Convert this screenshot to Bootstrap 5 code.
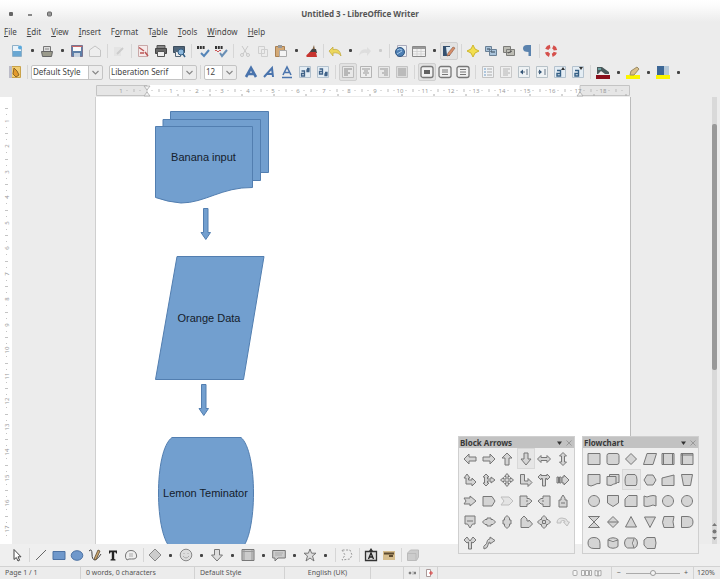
<!DOCTYPE html>
<html lang="en">
<head>
<meta charset="utf-8">
<meta name="viewport" content="width=device-width, initial-scale=1">
<title>Untitled 3 - LibreOffice Writer</title>
<link href="https://cdn.jsdelivr.net/npm/bootstrap@5.3.0/dist/css/bootstrap.min.css" rel="stylesheet">
<style>
  :root { --chrome: #ececec; --ink: #4c4c4c; --shape: #729fcf; }
  body { font-family: "Noto Sans", "Open Sans", sans-serif; font-size: 8px; line-height: 12px; color: var(--ink); background: var(--chrome); }
  .titlebar { height: 22px; padding: 6px 8px 0; background: linear-gradient(#fff, #fbfbfb 30%, var(--chrome)); }
  .titlebar h1 { font-size: 8px; line-height: 16px; color: #555; }
  .win-btns { width: 52px; height: 16px; }
  .menubar { height: 19px; padding: 0 4px; gap: 10px; }
  .menubar a { color: #444; text-decoration: none; }
  .toolrow { padding-left: 8px; }
  .row-std { height: 19px; }
  .row-fmt { height: 24px; padding-left: 6px; }
  .row-draw { height: 22px; background: #efefef; }
  .tbtn { width: 18px; height: 18px; padding: 0; border: 1px solid transparent; border-radius: 2px; background: none; display: flex; align-items: center; justify-content: center; flex: none; }
  .tbtn.pressed { background: #e2e2e2; border-color: #cfcfcf; }
  .tbtn svg { width: 14px; height: 14px; flex: none; }
  .drop { width: 12px; height: 16px; padding: 0; border: 0; background: none; flex: none; display: flex; align-items: center; justify-content: center; }
  .drop::before { content: ""; width: 3px; height: 3px; background: #444; border-radius: 1px; }
  .row-draw .drop { width: 13px; }
  .drop.off::before { background: #ccc; }
  .vsep { width: 6px; height: 14px; flex: none; background: linear-gradient(#d6d6d6, #d6d6d6) center / 1px 100% no-repeat; }
  .row-fmt .vsep { width: 7px; }
  .combo.form-select { font-size: 8px; line-height: 12px; height: 15px; padding: 0 15px 0 1px; border: 1px solid #c4c4c4; border-radius: 2px; color: #444; background-color: #fff; background-position: right 0 center; background-size: 14px 15px; flex: none;
    background-image: url("data:image/svg+xml,%3Csvg xmlns='http://www.w3.org/2000/svg' viewBox='0 0 14 15'%3E%3Cpath fill='%23ededed' d='M0 0h14v15H0z'/%3E%3Cpath stroke='%23c4c4c4' d='M.5 0v15'/%3E%3Cpath fill='none' stroke='%23888' stroke-width='1.2' d='M4.500 6l3 3 3-3'/%3E%3C/svg%3E"); }
  .w-style { width: 72px; margin-right: 6px; } .w-font { width: 88px; } .w-size { width: 33px; margin-right: 5px; }
  .hruler { height: 13px; padding-left: 6px; }
  .desk { padding-left: 2px; }
  .paper-w { width: 100%; max-width: 536px; }
  .hruler svg, .vruler svg { display: block; }
  .vruler { width: 12px; background: #fff; }
  .num { font-size: 6px; fill: #999; text-anchor: middle; }
  .paper { background: #fff; border-left: 1px solid #cfcfcf; border-right: 1px solid #bcbcbc; }
  .drawing { font-family: "Liberation Sans", Arial, sans-serif; font-size: 11px; }
  .drawing text { fill: #14202c; text-anchor: middle; }
  .vbar { width: 5px; margin-right: 3px; background: #d9d9d9; }
  .thumb { height: 55%; margin-top: 27px; background: #999; border-radius: 2px; }
  .navs { padding-bottom: 2px; }
  .navs svg { display: block; width: 5px; height: 20px; }
  .palettes { right: 21px; bottom: 25px; gap: 7px; }
  .palette { width: 117px; background: #efefef; border: 1px solid #cfcfcf; }
  .palette-head { height: 11px; background: #c2c2c2; padding: 0 2px 0 1px; }
  .palette-head h2 { font-size: 8px; line-height: 11px; color: #383838; }
  .palette-grid { display: grid; grid-template-columns: repeat(6, 1fr); padding: 0 2px; }
  .cell { height: 21px; padding: 0; border: 1px solid transparent; background: none; display: flex; align-items: center; justify-content: center; }
  .cell.chosen { background: #e6e6e6; border-color: #d8d8d8; }
  .cell svg { width: 14px; height: 14px; fill: #d4d4d4; stroke: #777; stroke-linejoin: round; }
  .cell.faint svg { opacity: .4; }
  .statusbar { height: 13px; font-size: 7px; line-height: 12px; border-top: 1px solid #d2d2d2; color: #555; }
  .statusbar > * { border-right: 1px solid #d2d2d2; padding: 0 5px; height: 12px; overflow: hidden; white-space: nowrap; }
  .statusbar > :last-child { border: 0; padding: 0 3px; }
  .s-page { width: 81px; } .s-words { width: 114px; } .s-style { width: 90px; } .s-lang { width: 86px; }
  .s-mode { width: 16px; } .s-sig { width: 18px; }
  .zoomer { width: 82px; } .s-pct { width: 26px; }
  .zoomer input { -webkit-appearance: none; appearance: none; width: 54px; height: 8px; margin: 0; background: linear-gradient(#aaa, #aaa) center / 100% 1px no-repeat; }
  .zoomer input::-webkit-slider-thumb { -webkit-appearance: none; width: 6px; height: 6px; border: 1px solid #999; border-radius: 50%; background: #f4f4f4; }
</style>
<script src="https://cdn.jsdelivr.net/npm/bootstrap@5.3.0/dist/js/bootstrap.bundle.min.js"></script>
</head>
<body class="vh-100 d-flex flex-column overflow-hidden position-relative">

<header class="flex-shrink-0">
  <div class="titlebar d-flex">
    <svg class="win-btns flex-shrink-0" viewBox="0 0 52 16" aria-hidden="true"><rect x="1" y="6" width="4" height="4" rx="1" fill="#666"/><rect x="20" y="8" width="4" height="2" fill="#888"/><rect x="39.500" y="6" width="4" height="4" rx="1" fill="#999" stroke="#666"/></svg>
    <h1 class="flex-grow-1 text-center fw-bold m-0">Untitled 3 - LibreOffice Writer</h1>
    <span class="win-btns flex-shrink-0"></span>
  </div>
  <nav class="menubar d-flex align-items-center" aria-label="Menu">
    <a href="#"><u>F</u>ile</a><a href="#"><u>E</u>dit</a><a href="#"><u>V</u>iew</a><a href="#"><u>I</u>nsert</a><a href="#">F<u>o</u>rmat</a><a href="#">T<u>a</u>ble</a><a href="#"><u>T</u>ools</a><a href="#"><u>W</u>indow</a><a href="#"><u>H</u>elp</a>
  </nav>

  <div class="toolrow row-std d-flex align-items-center" role="toolbar" aria-label="Standard">
    <button class="tbtn" aria-label="New"><svg viewBox="0 0 14 14"><path d="M2.500 1.500h6l3 3v8h-9z" fill="#eaf3fa" stroke="#8fb0c8"/><path d="M3 7h8v5H3z" fill="#6aa7d2"/><circle cx="10" cy="3.500" r="2" fill="#5aa9dd"/></svg></button>
    <button class="drop" aria-label="New options"></button>
    <button class="tbtn" aria-label="Open"><svg viewBox="0 0 14 14"><path d="M3.500 2.500h7v7h-7z" fill="#ddd" stroke="#777"/><path d="M1.500 7.500h11l-1 5h-9z" fill="#9b9b8c" stroke="#666"/><path d="M5 5h4" stroke="#888"/></svg></button>
    <button class="drop" aria-label="Open options"></button>
    <button class="tbtn" aria-label="Save"><svg viewBox="0 0 14 14"><path d="M1.500 1.500h11v11h-11z" fill="#5d7fa8" stroke="#7a7590"/><path d="M3 2h8v5H3z" fill="#fafafa"/><path d="M2 2.500h10" stroke="#c66"/><path d="M4 9h6v4H4z" fill="#c9d3df"/></svg></button>
    <button class="tbtn" aria-label="Email"><svg viewBox="0 0 14 14"><path d="M1.500 6 7 2l5.500 4v6.500h-11z" fill="#eee" stroke="#c4c4c4"/></svg></button>
    <span class="vsep"></span>
    <button class="tbtn" aria-label="Edit"><svg viewBox="0 0 14 14"><path d="M2 3h7v9H2z" fill="#e4e4e4"/><path d="m5 10 6-6" stroke="#ccc" stroke-width="2"/></svg></button>
    <span class="vsep"></span>
    <button class="tbtn" aria-label="Export PDF"><svg viewBox="0 0 14 14"><path d="M2.500 1.500h9v11h-9z" fill="#f5eaea" stroke="#c9a9a9"/><path d="M3 3.500 8 7m1 1 3 4M4 9h4" stroke="#b55" stroke-width="1.500"/></svg></button>
    <button class="tbtn" aria-label="Print"><svg viewBox="0 0 14 14"><path d="M3 1.500h8V5H3z" fill="#888" stroke="#555"/><path d="M1.500 4.500h11v5h-11z" fill="#666" stroke="#444"/><path d="M3.500 7.500h7v5h-7z" fill="#eee" stroke="#555"/></svg></button>
    <button class="tbtn" aria-label="Print preview"><svg viewBox="0 0 14 14"><path d="M1.500 2.500h11v6h-11z" fill="#4f6478" stroke="#3d4e5e"/><path d="M3.500 7.500h5v5h-5z" fill="#eee" stroke="#567"/><circle cx="9" cy="8" r="3" fill="#8db8dc" stroke="#345f85"/><path d="m11 10 2 3" stroke="#345f85" stroke-width="1.500"/></svg></button>
    <span class="vsep"></span>
    <button class="tbtn" aria-label="Spelling"><svg viewBox="0 0 14 14" fill="none"><path d="M1 3.500h8" stroke="#333" stroke-width="3" stroke-dasharray="2 .8"/><path d="m5 9 3 3 5-6" stroke="#5585b8" stroke-width="2"/></svg></button>
    <button class="tbtn" aria-label="Auto spellcheck"><svg viewBox="0 0 14 14" fill="none"><path d="M1 3.500h8" stroke="#333" stroke-width="3" stroke-dasharray="2 .8"/><path d="M1 7q1-2 2 0t2 0 2 0" stroke="#c55"/><path d="m6 9 2 3 5-6" stroke="#6a8fb5" stroke-width="2"/></svg></button>
    <span class="vsep"></span>
    <button class="tbtn" aria-label="Cut"><svg viewBox="0 0 14 14" fill="none" stroke="#c8c8c8"><path d="m4 2 5 8M10 2 5 10"/><circle cx="4" cy="11" r="1.500"/><circle cx="10" cy="11" r="1.500"/></svg></button>
    <button class="tbtn" aria-label="Copy"><svg viewBox="0 0 14 14" fill="#ececec" stroke="#cfcfcf"><path d="M2.500 2.500h6v7h-6zM5.500 5.500h6v7h-6z"/></svg></button>
    <button class="tbtn" aria-label="Paste"><svg viewBox="0 0 14 14"><path d="M1.500 2.500h9v10h-9z" fill="#d3a976" stroke="#a98052"/><path d="M4 1h4v3H4z" fill="#999"/><path d="M5.500 6.500h7v6h-7z" fill="#f4f4f4" stroke="#aaa"/></svg></button>
    <button class="drop" aria-label="Paste options"></button>
    <button class="tbtn" aria-label="Clone formatting"><svg viewBox="0 0 14 14"><path d="m10 1 1 5-4 3z" fill="#806040"/><path d="M8 5h4l1 4H5z" fill="#444"/><path d="M2 12q3-4 5-4h5l1 5H3z" fill="#c8342f"/></svg></button>
    <span class="vsep"></span>
    <button class="tbtn" aria-label="Undo"><svg viewBox="0 0 14 14"><path d="M1 7l4-4v2.500q7-1.500 8 6.500-2.500-4-8-3V12z" fill="#ecd75c" stroke="#c0a83c" stroke-width=".7"/></svg></button>
    <button class="drop" aria-label="Undo list"></button>
    <button class="tbtn" aria-label="Redo"><svg viewBox="0 0 14 14"><path d="M13 7 9 3v2.500Q2 4 1 12q2.500-4 8-3v3z" fill="#dedede"/></svg></button>
    <button class="drop off" aria-label="Redo list"></button>
    <span class="vsep"></span>
    <button class="tbtn" aria-label="Hyperlink"><svg viewBox="0 0 14 14"><path d="M3.500 1.500h9v11h-9z" fill="#edf2f6" stroke="#aab"/><circle cx="6" cy="8" r="4.500" fill="#4e7fb4" stroke="#31567f"/><path d="M3 6q3-2 5 0M3 10l5-3" stroke="#a9cbe8" fill="none"/></svg></button>
    <button class="tbtn" aria-label="Table"><svg viewBox="0 0 14 14"><path d="M.5 2.500h13v10H.5z" fill="#f2f2f2" stroke="#888"/><path d="M1 3h12v2H1z" fill="#999"/><path d="M1 7.500h12M1 10h12M5 5v7M9 5v7" stroke="#ccc" stroke-width=".7"/></svg></button>
    <button class="drop" aria-label="Table size"></button>
    <button class="tbtn pressed" aria-label="Show draw functions"><svg viewBox="0 0 14 14"><path d="M1 2h7v10H1z" fill="#34506f"/><path d="M4 3h6v8H5z" fill="#dce9f3"/><path d="m6 9 5-6 2 1-5 7-3 1z" fill="#d78e6a" stroke="#8d5a40" stroke-width=".6"/></svg></button>
    <span class="vsep"></span>
    <button class="tbtn" aria-label="Navigator"><svg viewBox="0 0 14 14"><path d="m7 1 2 4 4 2-4 2-2 4-2-4-4-2 4-2z" fill="#f3df4f" stroke="#cdb62c"/></svg></button>
    <button class="tbtn" aria-label="Gallery"><svg viewBox="0 0 14 14"><path d="M1.500 2.500h6v5h-6zM5.500 5.500h7v6h-7z" fill="#a9c3da" stroke="#6a8095"/><path d="M3 5h3M7 8h4" stroke="#345"/></svg></button>
    <button class="tbtn" aria-label="Data sources"><svg viewBox="0 0 14 14"><path d="M1.500 2.500h7v6h-7zM4.500 5.500h8v6h-8z" fill="#bdbdb5" stroke="#7c7c78"/><path d="M6 9l4-2" stroke="#555"/></svg></button>
    <button class="tbtn" aria-label="Nonprinting characters"><svg viewBox="0 0 14 14"><path d="M11 1v11H8.500V8Q3 8 3 4.500T7 1z" fill="#5b83ae"/></svg></button>
    <span class="vsep"></span>
    <button class="tbtn" aria-label="Help"><svg viewBox="0 0 14 14" fill="none"><circle cx="7" cy="7" r="4.500" stroke="#eee" stroke-width="3.500"/><circle cx="7" cy="7" r="4.500" stroke="#d5504c" stroke-width="3.500" stroke-dasharray="4.200 2.870" stroke-dashoffset="-1.400"/></svg></button>
  </div>

  <div class="toolrow row-fmt d-flex align-items-center" role="toolbar" aria-label="Formatting">
    <button class="tbtn" aria-label="Styles"><svg viewBox="0 0 14 14"><path d="M1.500 1.500h11v11h-11z" fill="#f1cd72" stroke="#c9a24a"/><path d="M1 1h3v12H1z" fill="#bcbcc8"/><path d="m6 3 3 3 2 4-3 2-3-3z" fill="#e39a2b" stroke="#8d6424"/></svg></button>
    <span class="vsep"></span>
    <select class="combo form-select w-style" aria-label="Paragraph style"><option>Default Style</option></select>
    <select class="combo form-select w-font" aria-label="Font name"><option>Liberation Serif</option></select>
    <span class="vsep"></span>
    <select class="combo form-select w-size" aria-label="Font size"><option>12</option></select>
    <button class="tbtn" aria-label="Bold"><svg viewBox="0 0 14 14"><path d="m2 12 5-9 5 9M4 9h6" fill="none" stroke="#4a74ad" stroke-width="2.600"/></svg></button>
    <button class="tbtn" aria-label="Italic"><svg viewBox="0 0 14 14"><path d="m2 12 8-9 1 9M5 9h6" fill="none" stroke="#4a74ad" stroke-width="2"/></svg></button>
    <button class="tbtn" aria-label="Underline"><svg viewBox="0 0 14 14"><path d="m3 10 4-8 4 8M5 7.500h4M2 12.500h10" fill="none" stroke="#4a74ad" stroke-width="1.600"/></svg></button>
    <button class="tbtn" aria-label="Superscript"><svg viewBox="0 0 14 14"><path d="M1.500 1.500h11v11h-11z" fill="#e4edf4" stroke="#b4c2ce"/><path d="M3.500 6h3v5h-3V8.500h3M9 3.500h2V5H9v1.500h2.500" fill="none" stroke="#3f6288" stroke-width="1.300"/></svg></button>
    <button class="tbtn" aria-label="Subscript"><svg viewBox="0 0 14 14"><path d="M1.500 1.500h11v11h-11z" fill="#e4edf4" stroke="#b4c2ce"/><path d="M3.500 4h3v5h-3V6.500h3M9 7.500h2V9H9v1.500h2.500" fill="none" stroke="#3f6288" stroke-width="1.300"/></svg></button>
    <span class="vsep"></span>
    <button class="tbtn pressed" aria-label="Align left"><svg viewBox="0 0 14 14"><path d="M1.500 1.500h11v11h-11z" fill="#e8e8e8" stroke="#bbb"/><path d="M3 4h8M3 6h4M3 8h6M3 10h4" stroke="#888"/></svg></button>
    <button class="tbtn" aria-label="Center"><svg viewBox="0 0 14 14"><path d="M1.500 1.500h11v11h-11z" fill="#eee" stroke="#b4b4b4"/><path d="M3 4h8M5 6h4M4 8h6M6 10h2" stroke="#999"/></svg></button>
    <button class="tbtn" aria-label="Align right"><svg viewBox="0 0 14 14"><path d="M1.500 1.500h11v11h-11z" fill="#e8e8e8" stroke="#c4c4c4"/><path d="M3 4h8M7 6h4M5 8h6M7 10h4" stroke="#999"/></svg></button>
    <button class="tbtn" aria-label="Justify"><svg viewBox="0 0 14 14"><path d="M1.500 1.500h11v11h-11z" fill="#ddd" stroke="#c4c4c4"/><path d="M3 4h8M3 6h8M3 8h8M3 10h8" stroke="#999"/></svg></button>
    <span class="vsep"></span>
    <button class="tbtn pressed" aria-label="Line spacing 1"><svg viewBox="0 0 14 14"><rect x="1" y="1.500" width="12" height="11" rx="2" fill="#f1f1f1" stroke="#777" stroke-width="1.300"/><path d="M4 6h6M4 8h6" stroke="#333" stroke-width="1.300"/></svg></button>
    <button class="tbtn" aria-label="Line spacing 1.5"><svg viewBox="0 0 14 14"><rect x="1" y="1.500" width="12" height="11" rx="2" fill="#f1f1f1" stroke="#777" stroke-width="1.300"/><path d="M4 5h6M4 7h6M4 9.500h6" stroke="#777"/></svg></button>
    <button class="tbtn" aria-label="Line spacing 2"><svg viewBox="0 0 14 14"><rect x="1" y="1.500" width="12" height="11" rx="2" fill="#f1f1f1" stroke="#777" stroke-width="1.300"/><path d="M4 4.500h6M4 7h6M4 9.500h6" stroke="#777"/></svg></button>
    <span class="vsep"></span>
    <button class="tbtn" aria-label="Numbering"><svg viewBox="0 0 14 14"><path d="M1.500 1.500h11v11h-11z" fill="#f0f2f4" stroke="#c2c2c2"/><path d="M3 4h2M3 7h2M3 10h2" stroke="#6a9ac6"/><path d="M6 4h5M6 7h5M6 10h5" stroke="#aaa"/></svg></button>
    <button class="tbtn" aria-label="Bullets"><svg viewBox="0 0 14 14"><path d="M1.500 1.500h11v11h-11z" fill="#efefef" stroke="#c8c8c8"/><path d="M4 4h7M4 6h5M4 8h7M4 10h5" stroke="#b4b4b4"/></svg></button>
    <button class="tbtn" aria-label="Decrease indent"><svg viewBox="0 0 14 14"><path d="M1.500 1.500h11v11h-11z" fill="#eef2f4" stroke="#b8c2c8"/><path d="m3 7 3-2.500v5z" fill="#357"/><path d="M6 7h2M9 5h2M9 7h2M9 9h2" stroke="#678"/></svg></button>
    <button class="tbtn" aria-label="Increase indent"><svg viewBox="0 0 14 14"><path d="M1.500 1.500h11v11h-11z" fill="#eef2f4" stroke="#b8c2c8"/><path d="M7 7 4 4.500v5z" fill="#357"/><path d="M3 7h2M9 5h2M9 7h2M9 9h2" stroke="#678"/></svg></button>
    <button class="tbtn" aria-label="Increase font"><svg viewBox="0 0 14 14"><path d="M1.500 1.500h11v11h-11z" fill="#e4edf4" stroke="#b4c2ce"/><path d="M4 5.500h3.500V11H4V8.500h3" fill="none" stroke="#345f85" stroke-width="1.400"/><path d="m8 5 2-3 2 3z" fill="#333"/></svg></button>
    <button class="tbtn" aria-label="Decrease font"><svg viewBox="0 0 14 14"><path d="M1.500 1.500h11v11h-11z" fill="#e4edf4" stroke="#b4c2ce"/><path d="M4 5.500h3.500V11H4V8.500h3" fill="none" stroke="#345f85" stroke-width="1.400"/><path d="m8 2 2 3 2-3z" fill="#333"/></svg></button>
    <span class="vsep"></span>
    <button class="tbtn" aria-label="Font color"><svg viewBox="0 0 14 14"><path d="M1 2h5l7 5v2H9L5 6 2 9H1z" fill="#4b5a5c"/><path d="M2 3h3v2H2z" fill="#6aa0a0"/><path d="M0 10h14v4H0z" fill="#8b0f1c"/></svg></button>
    <button class="drop" aria-label="Font colors"></button>
    <button class="tbtn" aria-label="Highlighting"><svg viewBox="0 0 14 14"><path d="M0 10h14v4H0z" fill="#fbf500"/><path d="m4 10 1-4 6-4 2 2-5 6z" fill="#d9c08a" stroke="#9d8c66"/></svg></button>
    <button class="drop" aria-label="Highlight colors"></button>
    <button class="tbtn" aria-label="Background color"><svg viewBox="0 0 14 14"><path d="M0 10h14v4H0z" fill="#fbf500"/><path d="M1 1h7v9H1z" fill="#3d6796"/><path d="M8 1h5v9H8z" fill="#b5c8d8"/></svg></button>
    <button class="drop" aria-label="Background colors"></button>
  </div>

  <div class="hruler d-flex justify-content-center">
    <div class="paper-w"><svg id="hruler" width="100%" height="13" aria-hidden="true"></svg></div>
  </div>
</header>

<main class="flex-fill d-flex overflow-hidden h-0" id="work">
  <div class="vruler flex-shrink-0 overflow-hidden"><svg id="vruler" width="12" height="100%" aria-hidden="true"></svg></div>
  <div class="desk flex-grow-1 d-flex justify-content-center overflow-hidden">
    <section class="paper paper-w overflow-hidden" aria-label="Document">
      <svg class="drawing d-block" width="400" height="540" viewBox="96 97 400 540" fill="#729fcf" stroke="#527eb0" stroke-width="1">
        <path d="M170.500 111.500h98v61h-98z"/>
        <path d="M163 119.500h97.500v61H163z"/>
        <path d="M155.500 126.500h97V187.500C222 187 205 203 181 203Q168 202 155.500 197.500z"/>
        <path d="M203.500 208.500h4.500v24h2.500l-4.700 7-4.800-7h2.500z"/>
        <path d="M177 256.500h87l-20.500 123h-88z"/>
        <path d="M201.500 384.500h4.500v24h2.500l-4.700 7-4.800-7h2.500z"/>
        <path d="M172 437.500h69C249 444 253.500 468 253.500 493S249 543 241 549h-69C163 543 158.500 518 158.500 493S163 444 172 437.500z"/>
        <g stroke="none"><text x="203.500" y="161">Banana input</text><text x="209" y="322">Orange Data</text><text x="205.500" y="497">Lemon Teminator</text></g>
      </svg>
    </section>
  </div>
  <div class="vbar flex-shrink-0 d-flex flex-column justify-content-between" role="scrollbar" aria-controls="work" aria-valuenow="0" aria-label="Scroll">
    <div class="thumb"></div>
    <div class="navs"><svg viewBox="0 0 5 20" fill="#777"><path d="M0 4l2.500-3L5 4zM0 15l2.500 3L5 15z"/><circle cx="2.500" cy="9.500" r="2"/></svg></div>
  </div>
</main>

<div class="toolrow row-draw d-flex align-items-center flex-shrink-0" role="toolbar" aria-label="Drawing">
  <button class="tbtn" aria-label="Select"><svg viewBox="0 0 14 14"><path d="M4 1.500v10L6.300 9.500l1.700 3.500 1.600-.8L8 8.800h3z" fill="#fff" stroke="#444"/></svg></button>
  <span class="vsep"></span>
  <button class="tbtn" aria-label="Line"><svg viewBox="0 0 14 14"><path d="M2 12 12 2" stroke="#666"/></svg></button>
  <button class="tbtn" aria-label="Rectangle"><svg viewBox="0 0 14 14"><path d="M1 3.500h12v8H1z" fill="#6f98cb" stroke="#4d72a3"/></svg></button>
  <button class="tbtn" aria-label="Ellipse"><svg viewBox="0 0 14 14"><ellipse cx="7" cy="7.500" rx="5.800" ry="4.800" fill="#6f98cb" stroke="#4d72a3"/></svg></button>
  <button class="tbtn" aria-label="Freeform line"><svg viewBox="0 0 14 14"><path d="M1 3q3-3 3 3t3 6q4-2 6-6" fill="none" stroke="#444"/><path d="m6 11 4-9 2 1-4 9z" fill="#c9a36a" stroke="#5a4a33" stroke-width=".8"/></svg></button>
  <button class="tbtn" aria-label="Text"><svg viewBox="0 0 14 14"><path d="M3 2.500h8v3h-1l-.5-1.300H8.200V11l1.300.5v1h-5v-1l1.300-.5V4.200H4.500L4 5.500H3z" fill="#222"/></svg></button>
  <button class="tbtn" aria-label="Callout"><svg viewBox="0 0 14 14"><path d="M3 12q-2-2-1.500-5Q2.500 2.500 7 2.500t5.500 4.500T7.500 11H5z" fill="#eee" stroke="#777"/><path d="M5 6h4M5 8h4" stroke="#aaa"/></svg></button>
  <span class="vsep"></span>
  <button class="tbtn" aria-label="Basic shapes"><svg viewBox="0 0 14 14"><path d="m7 1 6 6-6 6-6-6z" fill="#ccc" stroke="#888"/></svg></button><button class="drop" aria-label="More basic shapes"></button>
  <button class="tbtn" aria-label="Symbol shapes"><svg viewBox="0 0 14 14"><circle cx="7" cy="7" r="5.800" fill="#ddd" stroke="#888"/><path d="M5 5v1M9 5v1M4 8q3 4 6 0" fill="none" stroke="#aaa"/></svg></button><button class="drop" aria-label="More symbol shapes"></button>
  <button class="tbtn" aria-label="Block arrows"><svg viewBox="0 0 14 14"><path d="M4.500 1.500h5V7h3L7 13 1.500 7h3z" fill="#ddd" stroke="#777"/></svg></button><button class="drop" aria-label="More block arrows"></button>
  <button class="tbtn" aria-label="Flowchart"><svg viewBox="0 0 14 14"><path d="M1 1.500h12v11H1z" fill="#ccc" stroke="#777"/><path d="M1 3.500h12M3 2v10M11 2v10" stroke="#999"/></svg></button><button class="drop" aria-label="More flowchart shapes"></button>
  <button class="tbtn" aria-label="Callouts"><svg viewBox="0 0 14 14"><path d="M.7 2.500h12.600v7.500H6L3 13v-3H.7z" fill="#ccc" stroke="#777"/><path d="M3 5h8M3 7h7" stroke="#aaa"/></svg></button><button class="drop" aria-label="More callouts"></button>
  <button class="tbtn" aria-label="Stars"><svg viewBox="0 0 14 14"><path d="m7 1 1.600 4.200H13L9.500 8l1.500 5-4-3-4 3 1.500-5L1 5.200h4.400z" fill="#ddd" stroke="#777"/></svg></button><button class="drop" aria-label="More stars"></button>
  <span class="vsep"></span>
  <button class="tbtn" aria-label="Points"><svg viewBox="0 0 14 14"><path d="M2 2l3 5-3 5 8-1 2-4-2-5z" fill="none" stroke="#999" stroke-dasharray="2 1.500"/></svg></button>
  <span class="vsep"></span>
  <button class="tbtn" aria-label="Fontwork"><svg viewBox="0 0 14 14"><path d="M1.500 3.500h11v9h-11z" fill="#ddd" stroke="#333" stroke-width="1.300"/><path d="m7 0 2 3H5z" fill="#333"/><path d="m4.500 11 2.500-6 2.500 6M5.500 9h3" fill="none" stroke="#222" stroke-width="1.300"/></svg></button>
  <button class="tbtn" aria-label="Image"><svg viewBox="0 0 14 14"><path d="M1 3h12v9H1z" fill="#d6bd8d"/><path d="M2 5.500h10M7 8h4" stroke="#5d4a2f" stroke-width="2"/></svg></button>
  <span class="vsep"></span>
  <button class="tbtn" aria-label="Extrusion"><svg viewBox="0 0 14 14"><path d="m1.500 5 3-3h8v7l-2 3.500h-9z" fill="#ccc" stroke="#bbb"/><path d="M2 5.500h8V12" fill="none" stroke="#bbb"/></svg></button>
</div>

<footer class="statusbar d-flex flex-shrink-0">
  <div class="s-page">Page 1 / 1</div>
  <div class="s-words">0 words, 0 characters</div>
  <div class="s-style">Default Style</div>
  <div class="s-lang text-center">English (UK)</div>
  <div class="px-3 flex-shrink-1"></div>
  <div class="s-mode p-0 text-center"><svg width="8" height="8" viewBox="0 0 8 8"><path d="M1 3h2v2H1zM5 2v4M6 3h2v2H6z" fill="#777" stroke="#888" stroke-width=".5"/></svg></div>
  <div class="s-sig p-0 text-center"><svg width="8" height="8" viewBox="0 0 8 8"><path d="M1.500.5h4v7h-4z" fill="#fff" stroke="#a99"/><path d="M4 4h4M6 2v4" stroke="#d44"/></svg></div>
  <div class="flex-grow-1 text-end"><svg width="34" height="8" viewBox="0 0 34 8" fill="#f6f6f6" stroke="#999" stroke-width=".8"><rect x="1" y="1.500" width="4" height="5" rx="1"/><path d="M9.500 1.500h3v5h-3zM13.500 1.500h3v5h-3zM17.500 1.500h2v5h-2zM23 1.500l3 .5v5l-3-.5zM29 1.500l-3 .5v5l3-.5z"/></svg></div>
  <div class="zoomer d-flex align-items-center justify-content-between"><span>−</span><input type="range" min="20" max="220" value="120" aria-label="Zoom"><span>+</span></div>
  <div class="s-pct">120%</div>
</footer>

<div class="palettes position-absolute d-flex">
  <section class="palette" aria-label="Block Arrows">
    <div class="palette-head d-flex align-items-center justify-content-between"><h2 class="m-0 fw-bold">Block Arrows</h2><svg width="16" height="8" viewBox="0 0 16 8"><path d="M1 2.500h5L3.500 6z" fill="#333"/><path d="m10.500 1.500 5 5m0-5-5 5" stroke="#999"/></svg></div>
    <div class="palette-grid" id="arrows"></div>
  </section>
  <section class="palette" aria-label="Flowchart">
    <div class="palette-head d-flex align-items-center justify-content-between"><h2 class="m-0 fw-bold">Flowchart</h2><svg width="16" height="8" viewBox="0 0 16 8"><path d="M1 2.500h5L3.500 6z" fill="#333"/><path d="m10.500 1.500 5 5m0-5-5 5" stroke="#999"/></svg></div>
    <div class="palette-grid" id="flow"></div>
  </section>
</div>

<script>
  const arrows = [
    ['Left', 'M1 7l5-5v3h7v4H6v3z'], ['Right', 'M13 7 8 2v3H1v4h7v3z'], ['Up', 'M7 1l5 5H9v7H5V6H2z'], ['Down', 'M5 1h4v6h3l-5 6-5-6h3z'],
    ['Left and right', 'M.5 7 4 3.500v2h6v-2L13.500 7 10 10.500v-2H4v2z'], ['Up and down', 'M7 .5 10.500 4h-2v6h2L7 13.500 3.500 10h2V4h-2z'],
    ['Up and right', 'M1 5l3-4 3 4H5.500v2H9V5l4 4-4 4v-2H3V5z'], ['Up, right and down', 'M4 1l3 3H5.500v2H9V4l4 3-4 3V8H5.500v2H7l-3 3-3-3h1.500V4H1z'], ['Four way', 'M7 .5l2.500 3H8V6h2.500V4.500l3 2.500-3 2.500V8H8v2.500h1.500L7 13.500l-2.500-3H6V8H3.500v1.500L.5 7l3-2.500V6H6V3.500H4.500z'],
    ['Corner right', 'M1.500 1.500h4V8H9V5.500l4 4-4 4V11H1.500z'], ['Split', 'M1 4l3-3v1.500h6V1l3 3-3 3V5.500H8.500V13h-3V5.500H4V7z'], ['Striped right', 'M1 4h1.500v6H1zM3.500 4H5v6H3.500zM6 4h2V2l5 5-5 5v-2H6z'],
    ['Notched right', 'M1 4h6V2l6 5-6 5v-2H1l2-3z'], ['Pentagon', 'M1 2.500h9L13 7l-3 5H1z'], ['Chevron', 'M1 3h8l4 4-4 4H1l3-4z', 'faint'],
    ['Right callout', 'M1 2h7v2.500h2L13 7l-3 3H8v2.500H1zM8 6v2'], ['Left callout', 'M13 2H6v2.500H4L1 7l3 3h2v2.500h7zM6 6v2'], ['Up callout', 'M3 13V6h2V4l2-3 2 3v2h2v7zM5 9h4'],
    ['Down callout', 'M2 1h10v8H9.500L7 13 4.500 9H2zM4 6h6'], ['Left and right callout', 'M.5 7 3 4.500h2V3h4v1.500h2L13.500 7 11 9.500H9V11H5V9.500H3z'], ['Up and down callout', 'M7 .5 9.500 3v2H11v4H9.500v2L7 13.500 4.500 11V9H3V5h1.500V3z'],
    ['Up and right callout', 'M2 4l3-3 3 3v2h2V5l3.500 4-3.500 3.500H2z'], ['Four way callout', 'M7 .5 9.500 3v1.500H11L13.500 7 11 9.500H9.500V11L7 13.500 4.500 11V9.500H3L.5 7 3 4.500h1.500V3zM5.500 5.500h3v3h-3z'], ['Circular', 'M1 8Q1 3 6 3t6 4h1.500L11 11 7.500 7H9Q9 5 6.500 5.500T5 8z', 'faint'],
    ['Right or left', 'M1 4l3-3 3 4 3-4 3 3-3 3-1.500-1V13h-3V6L4 7z'], ['S-shaped', 'M2 13q-1-3 1-4t2-3 2-3h1V1l5 3.500L8 8V6q-2 0-2 3t-4 4z']
  ];
  const flow = [
    ['Process', 'M1 1.500h12v11H1z'], ['Alternate process', 'M3 1.500h8q2 0 2 2v7q0 2-2 2H3q-2 0-2-2v-7q0-2 2-2z'], ['Decision', 'M7 1.500 12.500 7 7 12.500 1.500 7z'], ['Data', 'M4 1.500h9.500l-3.500 11H.5z'], ['Predefined process', 'M1 1.500h12v11H1zM2.500 1.500v11M11.500 1.500v11'], ['Internal storage', 'M1 1.500h12v11H1zM2.500 1.500v11M1 3h12'],
    ['Document', 'M1 1.500h12v9Q10 10 7 12T1 12z'], ['Multidocument', 'M3.500 1.500H13v8h-1.500l-1.500 1Q7 11 5 12.500L1 12V3.500h2.500zM1 3.500h9v7'], ['Terminator', 'M3 1.500h8q2 1 2 5.500t-1 5.500H2Q1 11 1 7t2-5.500z'], ['Preparation', 'M4 2h6l3 5-3 5H4L1 7z'], ['Manual input', 'M1 5l12-3v10.500H1z'], ['Manual operation', 'M1.500 1.500h11l-2 11h-7z'],
    ['Connector', 'M7 1.500a5.500 5.500 0 1 0 .01 0z'], ['Off-page connector', 'M1.500 1.500h11V9L7 12.500 1.500 9z'], ['Card', 'M4.500 1.500h8.500v11H1V5z'], ['Punched tape', 'M1 2q3 2 6 0 3-1 6 0v10q-3-2-6 0-3 1-6 0z'], ['Summing junction', 'M7 1.500a5.500 5.500 0 1 0 .01 0z'], ['Or', 'M7 1.500a5.500 5.500 0 1 0 .01 0z'],
    ['Collate', 'M1.500 1.500h11L7 7l5.500 5.500h-11L7 7z'], ['Sort', 'M7 1.500 12.500 7 7 12.500 1.500 7zM2 7h10'], ['Extract', 'M7 1.500 12.500 12h-11z'], ['Merge', 'M1.500 2h11L7 12.500z'], ['Stored data', 'M3 1.500h10q-2 5 0 11H3q-3-5 0-11z'], ['Delay', 'M1.500 1.500H7q6 0 6 5.500t-6 5.500H1.500z'],
    ['Sequential access', 'M7 1.500q6 0 6 6v5H7q-6 0-6-5.500t6-5.500z'], ['Magnetic disc', 'M2 3.500q5-3.500 10 0v7q-5 3.500-10 0zM2 4q5 3 10 0'], ['Direct access storage', 'M3.500 2h7q3 1 3 5t-3 5h-7q-3-1-3-5t3-5zM10 2.500Q7 7 10 12'], ['Display', 'M4 1.500h8Q14 7 12 12.500H4L1 9V4z']
  ];
  function fill(id, list, chosen) {
    document.getElementById(id).innerHTML = list.map(([name, d, state], i) =>
      `<button class="cell ${state || ''} ${i === chosen ? 'chosen' : ''}" aria-label="${name}"><svg viewBox="0 0 14 14"><path d="${d}"/></svg></button>`).join('');
  }
  fill('arrows', arrows, 3);
  fill('flow', flow, 8);

  // Rulers: one number per centimetre, short ticks between.
  const CM = 25.4;
  let h = '<rect x="52" y="1" width="433" height="11" fill="#fff"/>' +
    '<path d="M1.500 1.500H52v10H1.500zM485 1.500h49.500v10H485z" fill="#e6e6e6" stroke="#c4c4c4"/>' +
    '<path d="M49 2h6l-3 4zM49 12h6l-3-4zM482 12h6l-3-4z" fill="#f4f4f4" stroke="#aaa" stroke-width=".8"/>';
  for (let n = -1; n <= 18; n++) {
    const x = Math.round(51 + n * CM);
    if (n) h += `<text class="num" x="${x}" y="9">${Math.abs(n)}</text>`;
    for (const q of [6, 13, 19]) if (x + q < 532) h += `<path d="M${x + q} ${q === 13 ? 5 : 6}v${q === 13 ? 3 : 1}" stroke="#bbb"/>`;
    if (n > 0 && n < 17) h += `<path d="M${Math.round(51 + n * 32)} 10v2" stroke="#aaa"/>`;
  }
  document.getElementById('hruler').innerHTML = h;

  function drawVertical() {
    const room = document.getElementById('work').clientHeight;
    let v = '';
    for (let n = 1; n * 25.5 + 4 < room; n++) {
      const y = Math.round(n * 25.5 - 2);
      v += `<text class="num" transform="translate(9 ${y}) rotate(-90)">${n}</text><path d="M5 ${y - 12.5}h3M6 ${y - 6.5}h1M6 ${y + 6.5}h1" stroke="#c4c4c4"/>`;
    }
    document.getElementById('vruler').innerHTML = v;
  }
  drawVertical();
  addEventListener('resize', drawVertical);
</script>
</body>
</html>
